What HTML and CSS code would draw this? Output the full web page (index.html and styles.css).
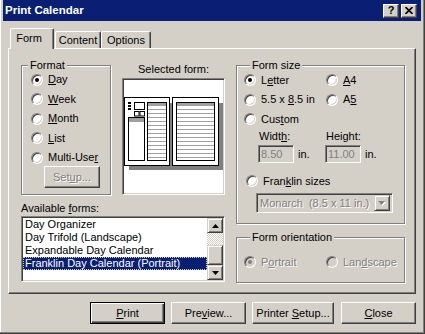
FILE: index.html
```html
<!DOCTYPE html>
<html lang="en">
<head>
    <meta charset="UTF-8">
    <title>Print Calendar</title>
    <link rel="stylesheet" href="styles.css">
</head>
<body>
    <div class="window">
        <div class="titlebar">
            <span class="title">Print Calendar</span>
            <span class="cap-btn help">?</span>
            <span class="cap-btn close">
                <svg width="8" height="7" viewBox="0 0 8 7"><path d="M0.5 0 L7.5 7 M7.5 0 L0.5 7" stroke="#000" stroke-width="1.6"/></svg>
            </span>
        </div>

        <div class="client">
            <div class="tabs">
                <div class="tab active">Form</div>
                <div class="tab tab-content">Content</div>
                <div class="tab tab-options">Options</div>
            </div>

            <div class="panel">
                <div class="col-left">
                    <div class="top-row">
                        <fieldset class="group format">
                            <legend>Format</legend>
                            <div class="radios">
                                <div class="radio-row"><span class="radio checked"></span><span><u>D</u>ay</span></div>
                                <div class="radio-row"><span class="radio"></span><span><u>W</u>eek</span></div>
                                <div class="radio-row"><span class="radio"></span><span><u>M</u>onth</span></div>
                                <div class="radio-row"><span class="radio"></span><span><u>L</u>ist</span></div>
                                <div class="radio-row"><span class="radio"></span><span>Multi-Use<u>r</u></span></div>
                            </div>
                            <div class="btn setup disabled">Set<u>u</u>p...</div>
                        </fieldset>

                        <div class="selected">
                            <div class="selected-label">Selected form:</div>
                            <div class="preview-box">
                                <svg width="99" height="113" viewBox="0 0 99 113">
                                    <!-- page shadow -->
                                    <rect x="5" y="23" width="94" height="67" fill="#808080"/>
                                    <!-- left page -->
                                    <rect x="0.5" y="17.5" width="45" height="68" fill="#fff" stroke="#000"/>
                                    <rect x="4" y="22" width="3" height="2" fill="#000"/>
                                    <rect x="4" y="25" width="3" height="2" fill="#000"/>
                                    <rect x="4" y="28" width="3" height="2" fill="#000"/>
                                    <rect x="10.5" y="22.5" width="10" height="7" fill="#fff" stroke="#000"/>
                                    <rect x="10.5" y="31.5" width="4.5" height="4.5" fill="#fff" stroke="#000"/>
                                    <rect x="16" y="31.5" width="4.5" height="4.5" fill="#fff" stroke="#000"/>
                                    <rect x="4.5" y="37.5" width="16" height="43" fill="#fff" stroke="#000"/>
                                    <rect x="5" y="38" width="15" height="4" fill="#a0a0a0"/>
                                    <rect x="23.5" y="22.5" width="19" height="58" fill="#fff" stroke="#000"/>
                                    <rect x="24" y="23" width="18" height="3" fill="#a0a0a0"/>
                                    <path d="M24 29.5h18M24 33.5h18M24 37.5h18M24 41.5h18M24 45.5h18M24 49.5h18M24 53.5h18M24 57.5h18M24 61.5h18M24 65.5h18M24 69.5h18M24 73.5h18M24 77.5h18" stroke="#a0a0a0"/>
                                    <!-- right page -->
                                    <rect x="48.5" y="17.5" width="46" height="68" fill="#fff" stroke="#000"/>
                                    <rect x="52.5" y="22.5" width="38" height="58" fill="#fff" stroke="#000"/>
                                    <rect x="53" y="23" width="37" height="3" fill="#a0a0a0"/>
                                    <path d="M53 29.5h37M53 33.5h37M53 37.5h37M53 41.5h37M53 45.5h37M53 49.5h37M53 53.5h37M53 57.5h37M53 61.5h37M53 65.5h37M53 69.5h37M53 73.5h37M53 77.5h37" stroke="#a0a0a0"/>
                                </svg>
                            </div>
                        </div>
                    </div>

                    <div class="avail-label">Available <u>f</u>orms:</div>
                    <div class="listbox">
                        <div class="items">
                            <div class="item">Day Organizer</div>
                            <div class="item">Day Trifold (Landscape)</div>
                            <div class="item">Expandable Day Calendar</div>
                            <div class="item current">Franklin Day Calendar (Portrait)</div>
                        </div>
                        <div class="scrollbar">
                            <div class="sb-btn">
                                <svg width="7" height="4" viewBox="0 0 7 4"><polygon points="0,4 3.5,0 7,4" fill="#000"/></svg>
                            </div>
                            <div class="sb-track"></div>
                            <div class="sb-thumb"></div>
                            <div class="sb-btn">
                                <svg width="7" height="4" viewBox="0 0 7 4"><polygon points="0,0 7,0 3.5,4" fill="#000"/></svg>
                            </div>
                        </div>
                    </div>
                </div>

                <div class="col-right">
                    <fieldset class="group size">
                        <legend>Form size</legend>
                        <div class="grid-2">
                            <div class="radio-row"><span class="radio checked"></span><span>L<u>e</u>tter</span></div>
                            <div class="radio-row"><span class="radio"></span><span><u>A</u>4</span></div>
                            <div class="radio-row"><span class="radio"></span><span>5.5 x <u>8</u>.5 in</span></div>
                            <div class="radio-row"><span class="radio"></span><span>A<u>5</u></span></div>
                        </div>
                        <div class="radio-row custom"><span class="radio"></span><span>Cus<u>t</u>om</span></div>
                        <div class="dims">
                            <div class="dim">
                                <div class="dim-label">Widt<u>h</u>:</div>
                                <div class="dim-line"><span class="field">8.50</span><span class="unit">in.</span></div>
                            </div>
                            <div class="dim">
                                <div class="dim-label">Height:</div>
                                <div class="dim-line"><span class="field">11.00</span><span class="unit">in.</span></div>
                            </div>
                        </div>
                        <div class="radio-row franklin"><span class="radio"></span><span>Fran<u>k</u>lin sizes</span></div>
                        <div class="combo">
                            <span class="combo-text">Monarch  (8.5 x 11 in.)</span>
                            <span class="combo-btn">
                                <svg width="8" height="5" viewBox="0 0 8 5"><polygon points="1,1 8,1 4.5,5" fill="#fff"/><polygon points="0,0 7,0 3.5,4" fill="#808080"/></svg>
                            </span>
                        </div>
                    </fieldset>

                    <fieldset class="group orient">
                        <legend>Form orientation</legend>
                        <div class="grid-2">
                            <div class="radio-row disabled"><span class="radio checked"></span><span>P<u>o</u>rtrait</span></div>
                            <div class="radio-row disabled"><span class="radio"></span><span>Lan<u>d</u>scape</span></div>
                        </div>
                    </fieldset>
                </div>
            </div>

            <div class="buttons">
                <div class="btn default b-print"><span><u>P</u>rint</span></div>
                <div class="btn b-preview"><span>Pre<u>v</u>iew...</span></div>
                <div class="btn b-setup"><span>Printer <u>S</u>etup...</span></div>
                <div class="btn b-close"><span><u>C</u>lose</span></div>
            </div>
        </div>
    </div>
</body>
</html>
```

FILE: styles.css
```css
* {
    box-sizing: border-box;
}

body {
    margin: 0;
    width: 425px;
    height: 334px;
    overflow: hidden;
    background: #d4d0c8;
    font-family: "Liberation Sans", Arial, sans-serif;
    font-size: 11px;
    line-height: 13px;
    color: #000;
}

u {
    text-decoration: underline;
    text-underline-offset: 1px;
}

.window {
    width: 425px;
    height: 334px;
    padding: 0 4px 4px 3px;
    background: #d4d0c8;
    box-shadow: inset -1px -1px 0 #404040, inset -2px -2px 0 #808080, inset 1px 0 0 #fff;
}

/* title bar */
.titlebar {
    height: 21px;
    display: flex;
    align-items: center;
    padding: 0 4px 0 2px;
    background: #0a1f73;
    color: #fff;
}

.title {
    flex: 1;
    font-weight: bold;
    font-size: 11.5px;
}

.cap-btn {
    width: 16px;
    height: 14px;
    display: flex;
    align-items: center;
    justify-content: center;
    background: #d4d0c8;
    color: #000;
    border: 1px solid;
    border-color: #fff #404040 #404040 #fff;
    box-shadow: inset -1px -1px 0 #808080;
    font-weight: bold;
    font-size: 11px;
}

.cap-btn.close {
    margin-left: 2px;
}

/* tabs */
.client {
    padding: 7px 5px 0 5px;
}

.tabs {
    height: 20px;
    display: flex;
    align-items: flex-end;
    padding-left: 2px;
}

.tab {
    height: 17px;
    padding-top: 2px;
    text-align: center;
    border-top: 1px solid #fff;
    border-left: 1px solid #fff;
    border-right: 1px solid #404040;
    border-radius: 2px 2px 0 0;
    box-shadow: inset -1px 0 0 #808080;
    background: #d4d0c8;
}

.tab.active {
    position: relative;
    z-index: 1;
    width: 44px;
    height: 21px;
    margin-bottom: -1px;
    padding-top: 3px;
    padding-right: 6px;
}

.tab-content {
    width: 46px;
    margin-left: 1px;
}

.tab-options {
    width: 50px;
}

.panel {
    height: 246px;
    display: flex;
    gap: 11px;
    padding: 10px 0 0 12px;
    border-top: 1px solid #fff;
    border-left: 1px solid #fff;
    border-right: 1px solid #404040;
    border-bottom: 1px solid #404040;
    box-shadow: inset -1px -1px 0 #808080;
}

/* group boxes */
.group {
    margin: 0;
    padding: 0;
    min-width: 0;
    border: 1px solid #808080;
    box-shadow: inset 1px 1px 0 #fff, 1px 1px 0 #fff;
}

.group legend {
    margin-left: 6px;
    padding: 0 2px;
    line-height: 13px;
    background: #d4d0c8;
}

.radio-row {
    height: 13px;
    display: flex;
    align-items: center;
    gap: 5px;
    white-space: nowrap;
}

.radio {
    position: relative;
    flex: none;
    width: 12px;
    height: 12px;
    border-radius: 50%;
    border: 1px solid;
    border-color: #808080 #fff #fff #808080;
    background: #fff;
    box-shadow: inset 1px 1px 0 #404040, inset -1px -1px 0 #d4d0c8;
}

.radio.checked::after {
    content: "";
    position: absolute;
    left: 3px;
    top: 3px;
    width: 4px;
    height: 4px;
    border-radius: 50%;
    background: #000;
}

.disabled {
    color: #808080;
    text-shadow: 1px 1px 0 #fff;
}

.radio-row.disabled .radio {
    background: #d4d0c8;
}

.radio-row.disabled .radio.checked::after {
    background: #808080;
}

/* left column */
.col-left {
    width: 204px;
}

.top-row {
    display: flex;
    gap: 11px;
}

.format {
    width: 90px;
    height: 136px;
}

.format .radios {
    display: flex;
    flex-direction: column;
    gap: 6.5px;
    padding: 1px 0 0 9px;
}

.btn {
    display: flex;
    align-items: center;
    justify-content: center;
    height: 22px;
    background: #d4d0c8;
    border: 1px solid;
    border-color: #fff #404040 #404040 #fff;
    box-shadow: inset -1px -1px 0 #808080;
    white-space: nowrap;
}

.setup {
    width: 56px;
    margin: 2px 0 0 22px;
}

.selected {
    width: 103px;
}

.selected-label {
    margin-top: 3.5px;
    text-align: center;
}

.preview-box {
    height: 117px;
    margin-top: 2.5px;
    background: #fff;
    border: 1px solid;
    border-color: #808080 #fff #fff #808080;
    box-shadow: inset 1px 1px 0 #404040, inset -1px -1px 0 #d4d0c8;
    padding: 1px;
}

.preview-box svg {
    display: block;
}

.avail-label {
    margin-top: 6.5px;
}

.listbox {
    height: 66px;
    margin-top: 1.5px;
    display: flex;
    background: #fff;
    border: 1px solid;
    border-color: #808080 #fff #fff #808080;
    box-shadow: inset 1px 1px 0 #404040, inset -1px -1px 0 #d4d0c8;
    padding: 1px;
}

.items {
    flex: 1;
}

.item {
    height: 13px;
    padding-left: 2px;
    white-space: nowrap;
}

.item.current {
    background: #0a1f73;
    color: #fff;
    outline: 1px dotted #d8d0a0;
    outline-offset: -1px;
}

.scrollbar {
    width: 16px;
    display: flex;
    flex-direction: column;
}

.sb-btn,
.sb-thumb {
    background: #d4d0c8;
    border: 1px solid;
    border-color: #d4d0c8 #404040 #404040 #d4d0c8;
    box-shadow: inset 1px 1px 0 #fff, inset -1px -1px 0 #808080;
}

.sb-btn {
    height: 15px;
    display: flex;
    align-items: center;
    justify-content: center;
}

.sb-track {
    height: 12px;
    background: repeating-conic-gradient(#fff 0 25%, #d4d0c8 0 50%) 0 0 / 2px 2px;
}

.sb-thumb {
    height: 20px;
}

/* right column */
.col-right {
    width: 170px;
}

.size {
    width: 169px;
    height: 165px;
    padding: 1.5px 0 0 7px;
}

.grid-2 {
    display: grid;
    grid-template-columns: 82px auto;
    row-gap: 6.5px;
}

.custom {
    margin-top: 6.5px;
}

.dims {
    display: flex;
    margin: 4px 0 0 14px;
}

.dim {
    width: 67px;
}

.dim-label {
    padding-left: 1px;
}

.dim-line {
    display: flex;
    align-items: center;
    margin-top: 2.5px;
}

.field {
    width: 36px;
    height: 18px;
    padding: 2px 0 0 2px;
    color: #808080;
    background: #d4d0c8;
    border: 1px solid;
    border-color: #808080 #fff #fff #808080;
    box-shadow: inset 1px 1px 0 #404040, inset -1px -1px 0 #d4d0c8;
}

.unit {
    margin-left: 4px;
}

.franklin {
    margin: 11.5px 0 0 2px;
}

.combo {
    width: 137px;
    height: 20px;
    margin: 5.5px 0 0 12px;
    display: flex;
    align-items: center;
    padding: 2px;
    background: #d4d0c8;
    border: 1px solid;
    border-color: #808080 #fff #fff #808080;
    box-shadow: inset 1px 1px 0 #404040, inset -1px -1px 0 #d4d0c8;
}

.combo-text {
    flex: 1;
    padding-left: 1px;
    white-space: pre;
    color: #808080;
    text-shadow: 1px 1px 0 #fff;
}

.combo-btn {
    width: 16px;
    height: 16px;
    display: flex;
    align-items: center;
    justify-content: center;
    border: 1px solid;
    border-color: #d4d0c8 #404040 #404040 #d4d0c8;
    box-shadow: inset 1px 1px 0 #fff, inset -1px -1px 0 #808080;
}

.orient {
    width: 169px;
    height: 52px;
    margin-top: 7px;
    padding: 11.5px 0 0 7px;
}

/* dialog buttons */
.buttons {
    display: flex;
    justify-content: flex-end;
    margin-top: 8px;
}

.buttons .btn {
    width: 75px;
}

.b-preview {
    margin-left: 6px;
}

.buttons .b-setup {
    width: 82px;
    margin-left: 6px;
}

.b-close {
    margin-left: 7px;
}

.btn.default {
    border: 1px solid #000;
    box-shadow: inset 1px 1px 0 #fff, inset -1px -1px 0 #404040, inset -2px -2px 0 #808080;
}
```
